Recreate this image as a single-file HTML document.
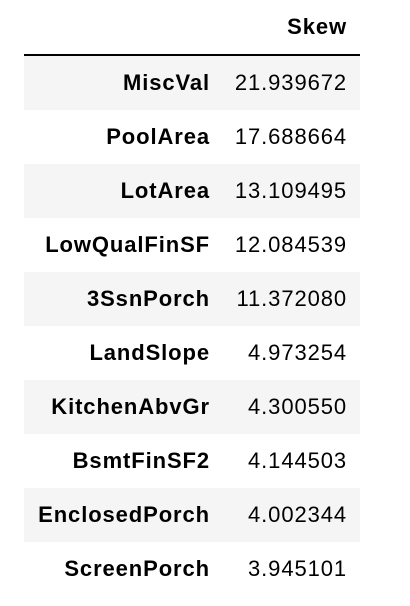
<!DOCTYPE html>
<html><head><style>
html,body{margin:0;padding:0;background:#fff;width:410px;height:606px;overflow:hidden}
body{font-family:"Liberation Sans",Arial,sans-serif;font-size:22px;letter-spacing:0.9px;color:#000}
table{position:absolute;left:24px;top:0;width:336px;border-collapse:collapse}
th,td{padding:0;text-align:right;height:54px;line-height:54px}
thead th{height:51px;border-bottom:2px solid #000;line-height:54px}
th.l{width:186px}
tbody th{padding-right:0}
td{padding-right:13px}
tbody tr:nth-child(odd){background:#f5f5f5}
tbody th{font-weight:bold}
thead th.v{padding-right:13px}
</style></head><body>
<table>
<thead><tr><th class="l"></th><th class="v">Skew</th></tr></thead>
<tbody>
<tr><th>MiscVal</th><td>21.939672</td></tr>
<tr><th>PoolArea</th><td>17.688664</td></tr>
<tr><th>LotArea</th><td>13.109495</td></tr>
<tr><th>LowQualFinSF</th><td>12.084539</td></tr>
<tr><th>3SsnPorch</th><td>11.372080</td></tr>
<tr><th>LandSlope</th><td>4.973254</td></tr>
<tr><th>KitchenAbvGr</th><td>4.300550</td></tr>
<tr><th>BsmtFinSF2</th><td>4.144503</td></tr>
<tr><th>EnclosedPorch</th><td>4.002344</td></tr>
<tr><th>ScreenPorch</th><td>3.945101</td></tr>
</tbody></table>
</body></html>
